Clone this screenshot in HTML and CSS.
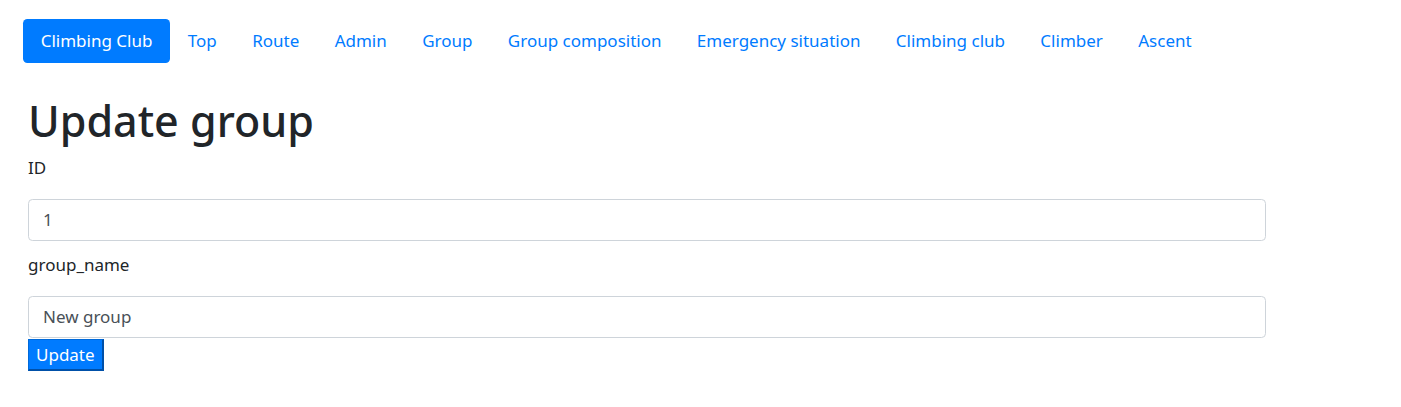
FILE: index.html
```html
<!DOCTYPE html>
<html>
<head>
<meta charset="utf-8">
<link rel="stylesheet" href="styles.css">
</head>
<body>
<nav class="nav">
  <a class="nav-link active" href="#">Climbing Club</a>
  <a class="nav-link" href="#">Top</a>
  <a class="nav-link" href="#">Route</a>
  <a class="nav-link" href="#">Admin</a>
  <a class="nav-link" href="#">Group</a>
  <a class="nav-link" href="#">Group composition</a>
  <a class="nav-link" href="#">Emergency situation</a>
  <a class="nav-link" href="#">Climbing club</a>
  <a class="nav-link" href="#">Climber</a>
  <a class="nav-link" href="#">Ascent</a>
</nav>
<main class="content">
  <h1 class="title">Update group</h1>
  <form class="form">
    <label class="label" for="id">ID</label>
    <input class="input" id="id" type="text" value="1">
    <label class="label" for="gn">group_name</label>
    <input class="input" id="gn" type="text" value="New group">
    <button class="btn" type="button">Update</button>
  </form>
</main>
</body>
</html>
```
FILE: styles.css
```css
html, body {
  margin: 0;
  padding: 0;
  background: #fff;
}
body {
  font-family: "Noto Sans", "Open Sans", sans-serif;
  font-size: 17px;
  line-height: 1.5;
  color: #212529;
}
.nav {
  display: flex;
  flex-wrap: wrap;
  padding: 19px 23px 0;
}
.nav-link {
  display: block;
  padding: 9px 17.7px;
  height: 26px;
  line-height: 26px;
  color: #007bff;
  text-decoration: none;
  border-radius: 4.4px;
}
.nav-link.active {
  background: #007bff;
  color: #fff;
}
.content {
  padding: 0 28px;
}
.title {
  margin: 32px 0 8px;
  font-size: 43px;
  font-weight: 500;
  line-height: 1.2;
}
.form {
  display: flex;
  flex-direction: column;
  align-items: flex-start;
  width: 1238px;
}
.label {
  display: block;
  margin: 0 0 18px;
  line-height: 26px;
}
.input {
  box-sizing: border-box;
  width: 100%;
  height: 42px;
  padding: 6px 14px;
  font-family: inherit;
  font-size: 17px;
  color: #495057;
  border: 1px solid #ced4da;
  border-radius: 4.4px;
  background: #fff;
  margin-bottom: 11px;
}
.input:last-of-type {
  margin-bottom: 1px;
}
.btn {
  height: 32px;
  padding: 0 7px;
  font-family: inherit;
  font-size: 17px;
  color: #fff;
  background: #007bff;
  border: 1px solid #0062cc;
  border-right-width: 2px;
  border-bottom-width: 2px;
  border-color: #0069d9 #0050a8 #0050a8 #0069d9;
}
```
